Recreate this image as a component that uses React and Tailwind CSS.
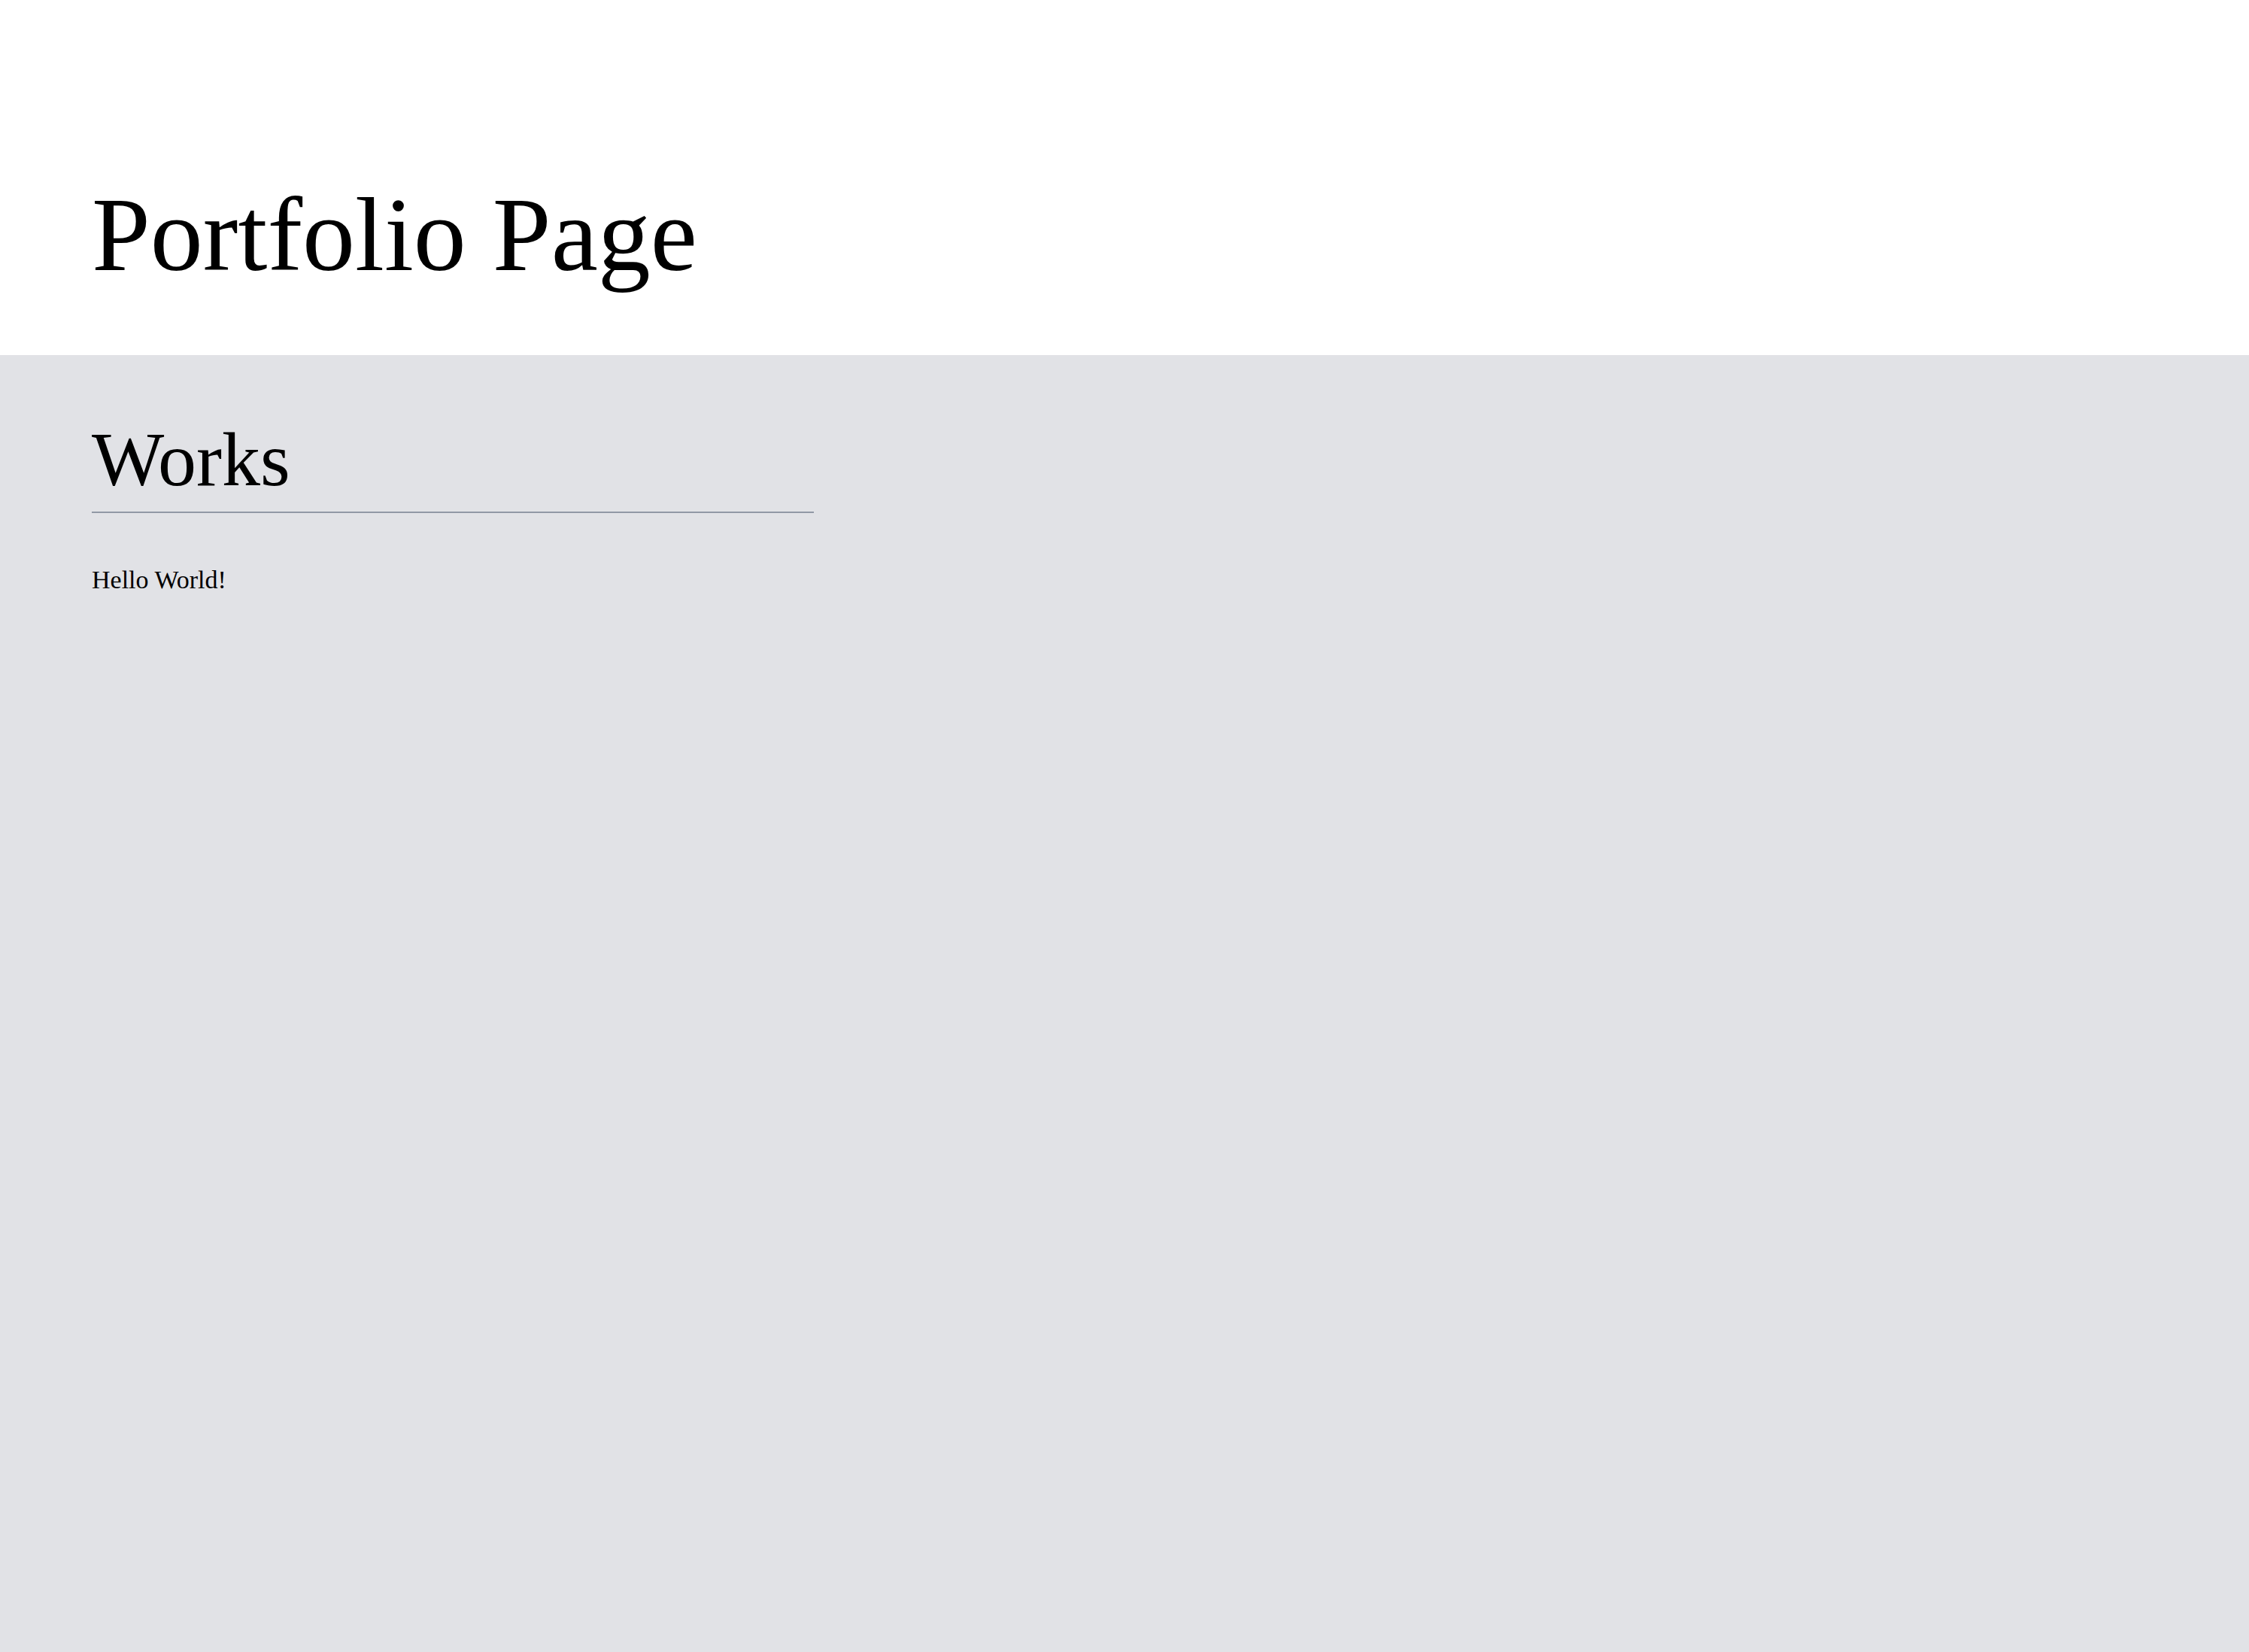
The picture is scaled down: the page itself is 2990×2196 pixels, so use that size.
export default function App() {
  return (
    <div className="min-h-[2196px] flex flex-col bg-[#e1e2e6] text-black">
      <header className="h-[472px] bg-white pl-[122px] pt-[242px]">
        <h1 className="font-['Liberation_Serif',serif] text-[140px] leading-none font-normal">
          Portfolio Page
        </h1>
      </header>
      <main className="flex-1 bg-[#e1e2e6] pl-[122px] pt-[88px]">
        <section className="w-[960px]">
          <h2 className="font-['Liberation_Serif',serif] text-[102px] leading-none font-normal">
            Works
          </h2>
          <div className="mt-[18px] h-[2px] w-[960px] bg-[#9199a5]" />
          <p className="mt-[72px] font-['Liberation_Serif',serif] text-[34px] leading-none">
            Hello World!
          </p>
        </section>
      </main>
    </div>
  );
}
